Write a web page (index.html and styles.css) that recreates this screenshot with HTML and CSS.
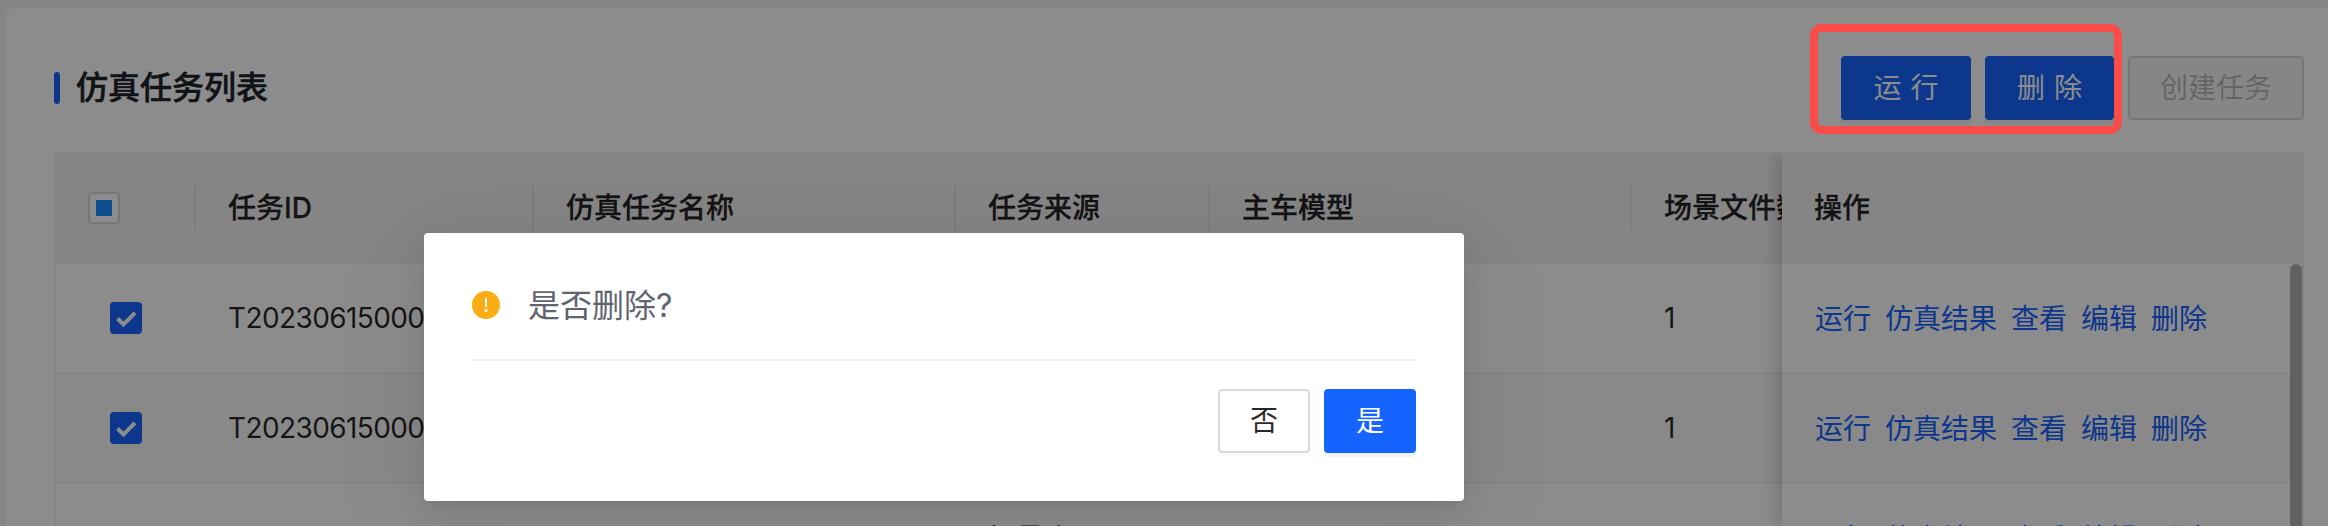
FILE: index.html
```html
<!DOCTYPE html>
<html lang="zh-CN">
<head>
<meta charset="utf-8">
<title>仿真任务列表</title>
<link rel="stylesheet" href="styles.css">
</head>
<body>
<main class="card">
  <header class="toolbar">
    <h1 class="title">仿真任务列表</h1>
    <div class="actions">
      <button class="btn primary run">运 行</button>
      <button class="btn primary remove">删 除</button>
      <button class="btn disabled">创建任务</button>
    </div>
  </header>
  <section class="table">
    <div class="scroll">
      <div class="row head">
        <div class="cell pick"><span class="box partial"></span></div>
        <div class="cell">任务ID</div>
        <div class="cell">仿真任务名称</div>
        <div class="cell">任务来源</div>
        <div class="cell">主车模型</div>
        <div class="cell">场景文件数</div>
      </div>
      <div class="row">
        <div class="cell pick"><span class="box checked"><svg viewBox="0 0 32 32"><path d="M7.500 16.500l6 6L25 10.800"/></svg></span></div>
        <div class="cell id">T20230615000</div><div class="cell"></div><div class="cell"></div><div class="cell"></div><div class="cell">1</div>
      </div>
      <div class="row even">
        <div class="cell pick"><span class="box checked"><svg viewBox="0 0 32 32"><path d="M7.500 16.500l6 6L25 10.800"/></svg></span></div>
        <div class="cell id">T20230615000</div><div class="cell"></div><div class="cell"></div><div class="cell"></div><div class="cell">1</div>
      </div>
      <div class="row">
        <div class="cell"></div><div class="cell"></div><div class="cell"></div><div class="cell source">场景库</div><div class="cell"></div><div class="cell"></div>
      </div>
    </div>
    <div class="fixed">
      <div class="frow fhead">操作</div>
      <div class="frow"><a>运行</a><a>仿真结果</a><a>查看</a><a>编辑</a><a>删除</a></div>
      <div class="frow even"><a>运行</a><a>仿真结果</a><a>查看</a><a>编辑</a><a>删除</a></div>
      <div class="frow"><a>运行</a><a>仿真结果</a><a>查看</a><a>编辑</a><a>删除</a></div>
    </div>
    <div class="thumb"></div>
  </section>
</main>
<div class="mask"></div>
<div class="modal">
  <div class="message">
    <svg class="warn" viewBox="0 0 28 28"><circle cx="14" cy="14" r="14"/><rect x="13" y="7" width="2" height="9"/><circle class="dot" cx="14" cy="19.500" r="1.500"/></svg>
    <span class="question">是否删除?</span>
  </div>
  <div class="footer">
    <button class="btn plain">否</button>
    <button class="btn primary">是</button>
  </div>
</div>
<div class="highlight"></div>
</body>
</html>
```
FILE: styles.css
```css
* { box-sizing: border-box; }
html { height: 526px; overflow: hidden; }
body {
  margin: 0;
  height: 526px;
  padding: 8px 0 0 6px;
  overflow: hidden;
  position: relative;
  background: #f0f2f5;
  color: rgba(0, 0, 0, .85);
  font: 28px/44px "Inter", "Noto Sans CJK SC", sans-serif;
}
.card {
  height: 518px;
  padding: 48px 24px 0 48px;
  overflow: hidden;
  background: #fff;
  border-radius: 8px 0 0 0;
}
.toolbar { display: flex; justify-content: space-between; height: 96px; }
.title {
  display: flex;
  align-items: center;
  gap: 16px;
  height: 64px;
  margin: 0;
  font-size: 32px;
  font-weight: 500;
  color: #1d2129;
  -webkit-text-stroke: .5px #1d2129;
}
.title::before { content: ""; width: 6px; height: 32px; border-radius: 3px; background: #1664ff; }
.actions { display: flex; gap: 14px; }
.btn {
  height: 64px;
  padding: 0 30px;
  border: 2px solid #d9d9d9;
  border-radius: 4px;
  background: #fff;
  color: rgba(0, 0, 0, .85);
  font: inherit;
  line-height: 58px;
  white-space: nowrap;
  box-shadow: 0 4px 0 rgba(0, 0, 0, .016);
}
.btn.primary { background: #1664ff; border-color: #1664ff; color: #fff; box-shadow: 0 4px 0 rgba(0, 0, 0, .045); }
.btn.run { width: 130px; word-spacing: 1px; }
.btn.remove { width: 129px; word-spacing: 1px; }
.btn.disabled { width: 176px; background: #f5f5f5; color: rgba(0, 0, 0, .25); box-shadow: none; }
.table {
  position: relative;
  display: flex;
  height: 374px;
  border: 2px solid #f0f0f0;
  border-bottom: 0;
  border-radius: 4px 4px 0 0;
  overflow: hidden;
}
.scroll { flex: none; width: 1726px; overflow: hidden; }
.row { display: grid; grid-template-columns: 140px 338px 422px 254px 422px 200px; height: 110px; border-bottom: 2px solid #f0f0f0; }
.cell { display: flex; align-items: center; padding-left: 32px; white-space: nowrap; }
.cell.id { letter-spacing: -.6px; }
.cell.source { padding-top: 2px; }
.cell.pick { padding-left: 54px; }
.row.head, .frow.fhead { background: #f2f2f5; font-weight: 500; -webkit-text-stroke: .3px rgba(0, 0, 0, .85); }
.head .cell.pick { padding-left: 32px; }
.head .cell { position: relative; }
.head .cell:not(:last-child)::after { content: ""; position: absolute; right: 0; top: 31px; width: 2px; height: 45px; background: rgba(0, 0, 0, .06); }
.row.even, .frow.even { background: #fafafa; }
.box { display: flex; width: 32px; height: 32px; border-radius: 4px; }
.partial { align-items: center; justify-content: center; background: #fff; border: 2px solid #d9d9d9; }
.partial::before { content: ""; width: 16px; height: 16px; background: #1890ff; }
.checked { background: #1664ff; }
.checked path { fill: none; stroke: #fff; stroke-width: 4; }
.fixed { flex: 1; position: relative; background: #fff; box-shadow: -6px 0 14px rgba(0, 0, 0, .16); }
.frow { display: flex; align-items: center; gap: 14px; height: 110px; padding: 2px 0 0 33px; border-bottom: 2px solid #f0f0f0; white-space: nowrap; }
.frow.fhead { padding: 0 0 0 32px; }
.frow a { color: #1664ff; }
.thumb { position: absolute; right: 0; top: 110px; width: 12px; height: 400px; border-radius: 6px; background: #b0b1b3; }
.mask { position: absolute; inset: 0; background: rgba(0, 0, 0, .45); }
.modal {
  position: absolute;
  left: 424px;
  top: 233px;
  width: 1040px;
  height: 268px;
  padding: 0 48px;
  background: #fff;
  border-radius: 4px;
  box-shadow: 0 6px 12px -8px rgba(0, 0, 0, .12), 0 12px 32px rgba(0, 0, 0, .08), 0 18px 96px 16px rgba(0, 0, 0, .05);
}
.message { display: flex; align-items: center; gap: 28px; height: 128px; padding-top: 18px; border-bottom: 2px solid #f0f0f0; font-size: 32px; color: #5f6470; }
.question { padding-top: 1px; }
.warn { width: 28px; height: 28px; fill: #faad14; }
.warn rect, .warn .dot { fill: #fff; }
.footer { display: flex; justify-content: flex-end; gap: 14px; padding-top: 28px; }
.footer .btn { width: 92px; }
.highlight { position: absolute; left: 1810px; top: 24px; width: 312px; height: 110px; border: 8px solid #f94c48; border-radius: 12px; }
```
